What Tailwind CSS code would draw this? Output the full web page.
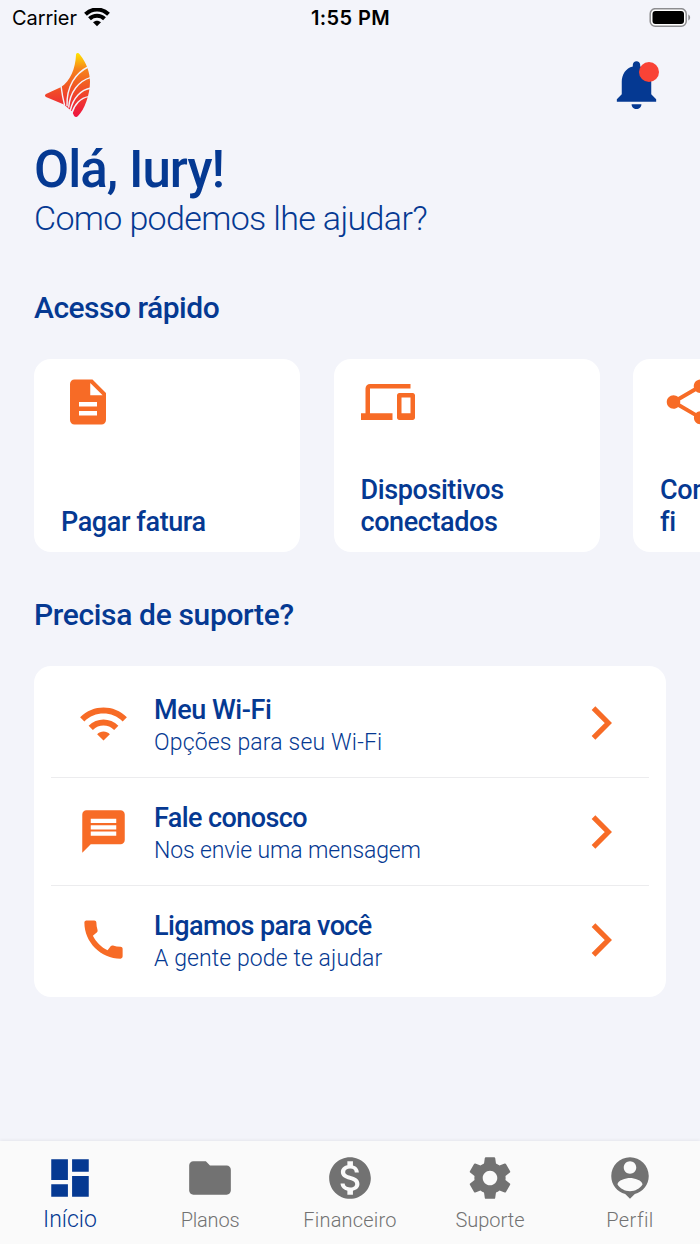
<!DOCTYPE html>
<html lang="pt-BR">

<head>
    <meta charset="UTF-8">
    <meta name="viewport" content="width=device-width, initial-scale=1.0">
    <title>Início</title>
    <script src="https://cdn.jsdelivr.net/npm/@tailwindcss/browser@4"></script>
</head>

<body class="bg-[#f3f4fa]">
    <div class="w-[700px] h-[1244px] overflow-hidden flex flex-col bg-[#f3f4fa] font-[Roboto,sans-serif] text-[#053992] whitespace-nowrap">
        <!-- status bar -->
        <div class="h-9 shrink-0 grid grid-cols-3 items-center pl-3 pr-[9px] font-[Inter,sans-serif] text-black">
            <div class="flex items-center gap-[7px]">
                <span class="text-[20px] leading-9 tracking-[-0.1px]">Carrier</span>
                <svg class="w-[26px] h-5" viewBox="0 0 26 20" fill="none" stroke="#000" stroke-width="4">
                    <path d="M1.500 6.300C8-.1 18-.1 24.500 6.300" />
                    <path d="M5.500 10.800c4.200-4 10.800-4 15 0" />
                    <path d="M9 14.300c2.300-2.100 5.700-2.100 8 0l-4 4z" fill="#000" stroke="none" />
                </svg>
            </div>
            <span class="pr-[2px] text-center text-[20px] leading-9 font-semibold tracking-[0.4px]">1:55 PM</span>
            <svg class="w-[42px] h-5 justify-self-end" viewBox="0 0 42 20">
                <rect x="1.200" y=".7" width="36" height="17.500" rx="5" fill="#fff" stroke="#8d8d90" stroke-width="1.500" />
                <rect x="3.500" y="3" width="31.500" height="13" rx="3" fill="#000" />
                <path d="M39.300 6.500v6c1.200-.6 1.800-1.700 1.800-3s-.6-2.400-1.800-3z" fill="#8d8d90" />
            </svg>
        </div>

        <!-- logo and notifications -->
        <header class="h-[104px] shrink-0 flex justify-between pl-[30px] pr-[34px]">
            <svg class="w-[75px] h-20 mt-[9px]" viewBox="0 0 225 240">
                <defs>
                    <linearGradient id="flame" x1="0" y1="0" x2="0" y2="1">
                        <stop offset="0" stop-color="#ffe600" />
                        <stop offset=".25" stop-color="#f7841a" />
                        <stop offset=".5" stop-color="#f15a22" />
                        <stop offset="1" stop-color="#ee1340" />
                    </linearGradient>
                </defs>
                <path fill="url(#flame)" d="M138 30C138 22 146 22 150 29C169 52 180 82 180 110C180 150 163 194 144 213C139 218 132 216 130 208L126 199L100 178L48 156C44 154 44 149 48 147L92 127C122 108 136 70 138 30z" />
                <g fill="none" stroke="#f3f4fa" stroke-width="4.200">
                    <path d="M93 122Q97 155 104 182" />
                    <path d="M174 66C138 84 109 122 111 184" />
                    <path d="M183 97C146 107 119 142 116 188" />
                    <path d="M183 129C152 134 129 160 121 196" />
                    <path d="M176 155C152 158 133 178 126 204" />
                </g>
            </svg>
            <div class="relative w-[59px] h-[59px] mt-[19px]">
                <svg class="w-[59px] h-[59px]" viewBox="0 0 24 24" fill="currentColor">
                    <path d="M12 22c1.100 0 2-.9 2-2h-4c0 1.100.89 2 2 2zm6-6v-5c0-3.070-1.640-5.640-4.500-6.320V4c0-.83-.67-1.500-1.500-1.500s-1.500.67-1.500 1.500v.68C7.630 5.360 6 7.920 6 11v5l-2 2v1h16v-1l-2-2z" />
                </svg>
                <span class="absolute left-8 top-[7px] size-5 rounded-full bg-[#f94336]"></span>
            </div>
        </header>

        <h1 class="px-[34px] text-[51px] leading-[59px] font-medium tracking-[-0.95px]">Olá, Iury!</h1>
        <p class="px-[34px] text-[34px] leading-[39px] font-light tracking-[-0.65px]">Como podemos lhe ajudar?</p>

        <h2 class="mt-[52px] px-[34px] text-[30px] leading-9 font-medium tracking-[-0.5px]">Acesso rápido</h2>
        <div class="mt-[33px] shrink-0 flex gap-[33.500px] pl-[34px] text-[27px] leading-8 font-medium tracking-[-0.4px]">
            <div class="w-[266px] h-[193px] shrink-0 rounded-[17px] bg-white flex flex-col justify-between pt-4 pb-3.5 px-[27px]">
                <svg class="size-[54px]" viewBox="0 0 24 24" fill="#f76b26">
                    <path d="M14 2H6c-1.100 0-1.990.9-1.990 2L4 20c0 1.100.89 2 1.990 2H18c1.100 0 2-.9 2-2V8l-6-6zm2 16H8v-2h8v2zm0-4H8v-2h8v2zm-3-5V3.500L18.500 9H13z" />
                </svg>
                <p>Pagar fatura</p>
            </div>
            <div class="w-[266px] h-[193px] shrink-0 rounded-[17px] bg-white flex flex-col justify-between pt-4 pb-3.5 px-[27px]">
                <svg class="size-[54px]" viewBox="0 0 24 24" fill="#f76b26">
                    <path d="M4 6h18V4H4c-1.100 0-2 .9-2 2v11H0v3h14v-3H4V6zm19 2h-6c-.55 0-1 .45-1 1v10c0 .55.45 1 1 1h6c.55 0 1-.45 1-1V9c0-.55-.45-1-1-1zm-1 9h-4v-7h4v7z" />
                </svg>
                <p>Dispositivos<br>conectados</p>
            </div>
            <div class="w-[266px] h-[193px] shrink-0 rounded-[17px] bg-white flex flex-col justify-between pt-4 pb-3.5 px-[27px]">
                <svg class="size-[54px]" viewBox="0 0 24 24" fill="#f76b26">
                    <path d="M18 16.080c-.76 0-1.440.3-1.960.77L8.910 12.700c.05-.23.09-.46.09-.7s-.04-.47-.09-.7l7.050-4.110c.54.5 1.250.81 2.040.81 1.660 0 3-1.340 3-3s-1.340-3-3-3-3 1.340-3 3c0 .24.04.47.09.7L8.040 9.810C7.500 9.310 6.790 9 6 9c-1.660 0-3 1.340-3 3s1.340 3 3 3c.79 0 1.500-.31 2.040-.81l7.120 4.160c-.05.21-.08.43-.08.65 0 1.610 1.310 2.920 2.920 2.920s2.920-1.310 2.920-2.920-1.310-2.920-2.920-2.920z" />
                </svg>
                <p>Compartilhar Wi-<br>fi</p>
            </div>
        </div>

        <h2 class="mt-[45px] px-[34px] text-[30px] leading-9 font-medium tracking-[-0.35px]">Precisa de suporte?</h2>
        <div class="mt-[33px] mx-[34px] h-[331px] shrink-0 rounded-[17px] bg-white px-[17px] pt-[3px]">
            <div class="h-[109px] flex items-center border-b border-[#ececee] pl-[27px] pr-7">
                <svg class="size-[51px]" viewBox="0 0 24 24" fill="#f76b26">
                    <path d="M1 9l2 2c4.970-4.970 13.030-4.970 18 0l2-2C16.930 2.930 7.080 2.930 1 9zm8 8l3 3 3-3c-1.650-1.660-4.340-1.660-6 0zm-4-4l2 2c2.760-2.760 7.240-2.760 10 0l2-2C15.140 9.140 8.870 9.140 5 13z" />
                </svg>
                <div class="ml-[25px] pt-1.5 flex-1">
                    <h3 class="text-[27px] leading-[34px] font-medium tracking-[-0.45px]">Meu Wi-Fi</h3>
                    <p class="text-[23px] leading-8 font-light tracking-[0.17px]">Opções para seu Wi-Fi</p>
                </div>
                <svg class="size-10" viewBox="0 0 40 40" fill="none" stroke="#f76b26" stroke-width="5.200">
                    <path d="M12.500 5.200l14.800 14.800-14.800 14.800" />
                </svg>
            </div>
            <div class="h-[108px] flex items-center border-b border-[#ececee] pl-[27px] pr-7">
                <svg class="size-[51px]" viewBox="0 0 24 24" fill="#f76b26">
                    <path d="M20 2H4c-1.100 0-1.990.9-1.990 2L2 22l4-4h14c1.100 0 2-.9 2-2V4c0-1.100-.9-2-2-2zm-2 12H6v-2h12v2zm0-3H6V9h12v2zm0-3H6V6h12v2z" />
                </svg>
                <div class="ml-[25px] pt-[5px] flex-1">
                    <h3 class="text-[27px] leading-[34px] font-medium tracking-[-0.6px]">Fale conosco</h3>
                    <p class="text-[23px] leading-8 font-light tracking-[-0.13px]">Nos envie uma mensagem</p>
                </div>
                <svg class="size-10" viewBox="0 0 40 40" fill="none" stroke="#f76b26" stroke-width="5.200">
                    <path d="M12.500 5.200l14.800 14.800-14.800 14.800" />
                </svg>
            </div>
            <div class="h-[107px] flex items-center pl-[27px] pr-7">
                <svg class="size-[51px]" viewBox="0 0 24 24" fill="#f76b26">
                    <path d="M20.010 15.380c-1.230 0-2.420-.2-3.530-.56-.35-.12-.74-.03-1.010.24l-1.570 1.970c-2.830-1.350-5.480-3.900-6.890-6.830l1.950-1.660c.27-.28.35-.67.24-1.020-.37-1.110-.56-2.300-.56-3.530 0-.54-.45-.99-.99-.99H4.190C3.650 3 3 3.240 3 3.990 3 13.280 10.730 21 20.010 21c.71 0 .99-.63.99-1.180v-3.450c0-.54-.45-.99-.99-.99z" />
                </svg>
                <div class="ml-[25px] pt-[5px] flex-1">
                    <h3 class="text-[27px] leading-[34px] font-medium tracking-[-0.6px]">Ligamos para você</h3>
                    <p class="text-[23px] leading-8 font-light tracking-[0.1px]">A gente pode te ajudar</p>
                </div>
                <svg class="size-10" viewBox="0 0 40 40" fill="none" stroke="#f76b26" stroke-width="5.200">
                    <path d="M12.500 5.200l14.800 14.800-14.800 14.800" />
                </svg>
            </div>
        </div>

        <!-- bottom navigation -->
        <nav class="mt-auto h-[103px] shrink-0 grid grid-cols-5 bg-[#fafafa] pt-[11.500px] text-center text-[20px] leading-6 font-light text-[#727272] shadow-[0_-1px_3px_rgba(0,0,0,0.06)]">
            <div class="flex flex-col items-center gap-[5px] text-[#053992]">
                <svg class="size-[50px]" viewBox="0 0 24 24" fill="currentColor">
                    <path d="M3 13h8V3H3v10zm0 8h8v-6H3v6zm10 0h8V11h-8v10zm0-18v6h8V3h-8z" />
                </svg>
                <span class="text-[23px] leading-6">Início</span>
            </div>
            <div class="flex flex-col items-center gap-[5px]">
                <svg class="size-[50px]" viewBox="0 0 24 24" fill="currentColor">
                    <path d="M10 4H4c-1.100 0-1.990.9-1.990 2L2 18c0 1.100.9 2 2 2h16c1.100 0 2-.9 2-2V8c0-1.100-.9-2-2-2h-8l-2-2z" />
                </svg>
                <span class="tracking-[-0.2px]">Planos</span>
            </div>
            <div class="flex flex-col items-center gap-[5px]">
                <svg class="size-[50px]" viewBox="0 0 24 24" fill="currentColor">
                    <path d="M12 2C6.480 2 2 6.480 2 12s4.480 10 10 10 10-4.480 10-10S17.520 2 12 2zm1.410 16.090V20h-2.670v-1.930c-1.710-.36-3.160-1.460-3.270-3.400h1.960c.1 1.050.82 1.870 2.650 1.870 1.960 0 2.400-.98 2.400-1.590 0-.83-.44-1.610-2.670-2.140-2.480-.6-4.180-1.620-4.180-3.670 0-1.720 1.390-2.840 3.110-3.210V4h2.670v1.950c1.860.45 2.790 1.860 2.850 3.390H14.300c-.05-1.110-.64-1.870-2.220-1.870-1.500 0-2.400.68-2.400 1.640 0 .84.65 1.390 2.670 1.910s4.180 1.390 4.180 3.910c-.01 1.830-1.380 2.830-3.120 3.160z" />
                </svg>
                <span class="tracking-[0.2px]">Financeiro</span>
            </div>
            <div class="flex flex-col items-center gap-[5px]">
                <svg class="size-[50px]" viewBox="0 0 24 24" fill="currentColor">
                    <path d="M19.430 12.980c.04-.32.07-.64.07-.98s-.03-.66-.07-.98l2.110-1.650c.19-.15.24-.42.12-.64l-2-3.460c-.12-.22-.39-.3-.61-.22l-2.490 1c-.52-.4-1.080-.73-1.690-.98l-.38-2.650C14.460 2.180 14.250 2 14 2h-4c-.25 0-.46.18-.49.42l-.38 2.650c-.61.25-1.170.59-1.690.98l-2.490-1c-.23-.09-.49 0-.61.22l-2 3.460c-.13.22-.07.49.12.64l2.110 1.650c-.04.32-.07.65-.07.98s.03.66.07.98l-2.110 1.650c-.19.15-.24.42-.12.64l2 3.460c.12.22.39.3.61.22l2.490-1c.52.4 1.080.73 1.690.98l.38 2.650c.03.24.24.42.49.42h4c.25 0 .46-.18.49-.42l.38-2.650c.61-.25 1.170-.59 1.690-.98l2.490 1c.23.09.49 0 .61-.22l2-3.460c.12-.22.07-.49-.12-.64l-2.110-1.650zM12 15.500c-1.930 0-3.500-1.570-3.500-3.500s1.570-3.500 3.500-3.500 3.500 1.570 3.500 3.500-1.570 3.500-3.500 3.500z" />
                </svg>
                <span>Suporte</span>
            </div>
            <div class="flex flex-col items-center gap-[5px]">
                <svg class="size-[50px]" viewBox="0 0 24 24" fill="currentColor">
                    <path d="M12 2c-4.970 0-9 4.030-9 9 0 4.170 2.840 7.670 6.690 8.690L12 22l2.310-2.310C18.160 18.670 21 15.170 21 11c0-4.970-4.030-9-9-9zm0 2c1.660 0 3 1.340 3 3s-1.340 3-3 3-3-1.340-3-3 1.340-3 3-3zm0 14.300c-2.500 0-4.710-1.280-6-3.220.03-1.990 4-3.080 6-3.080 1.990 0 5.970 1.090 6 3.080-1.290 1.940-3.500 3.220-6 3.220z" />
                </svg>
                <span class="tracking-[0.4px]">Perfil</span>
            </div>
        </nav>
    </div>
</body>

</html>
